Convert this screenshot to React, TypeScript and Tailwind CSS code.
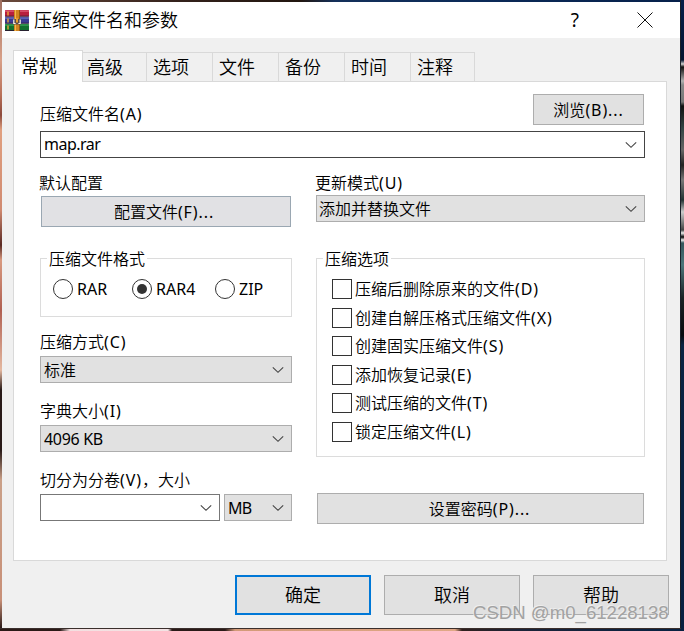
import React from "react";

type Kids = { children?: React.ReactNode };

// Chinese runs stay light, Latin runs are regular and slightly tracked in parentheses.
function Mixed({ text }: { text: string }) {
  return (
    <>
      {text.split(/([\x20-\x7e]+)/).map((part, i) =>
        i % 2 ? (
          <span key={i} className={`font-normal whitespace-pre ${part.startsWith("(") ? "tracking-[0.9px]" : ""}`}>
            {part}
          </span>
        ) : (
          part
        ),
      )}
    </>
  );
}

function Chevron() {
  return (
    <svg width="12" height="8" viewBox="0 0 12 8" className="shrink-0" fill="none" stroke="#444" strokeWidth="1.1">
      <path d="M0.8 1.3 6 6.3 11.2 1.3" />
    </svg>
  );
}

function Combo({ className, text = "", textClass = "" }: { className: string; text?: string; textClass?: string }) {
  return (
    <div className={`flex h-[27px] items-center justify-between border pr-[7px] pl-[3px] ${className}`}>
      <span className={textClass}>
        <Mixed text={text} />
      </span>
      <Chevron />
    </div>
  );
}

function Label({ className = "", text }: { className?: string; text: string }) {
  return (
    <div className={`h-5 whitespace-nowrap ${className}`}>
      <Mixed text={text} />
    </div>
  );
}

function Group({ title, className, children }: Kids & { title: string; className: string }) {
  return (
    <div className={`border border-[#dcdcdc] ${className}`}>
      <div className="-mt-[10px] ml-[6px] h-5 w-fit bg-white px-[2px]">{title}</div>
      {children}
    </div>
  );
}

function Radio({ label, checked, className }: { label: string; checked?: boolean; className: string }) {
  return (
    <div className={`flex items-center gap-1 ${className}`}>
      <div className="flex size-5 shrink-0 items-center justify-center rounded-full border border-[#333]">
        {checked && <div className="size-[10px] rounded-full bg-[#333]" />}
      </div>
      <span>
        <Mixed text={label} />
      </span>
    </div>
  );
}

function WinRarIcon() {
  return (
    <svg width="24" height="21" viewBox="0 0 24 21">
      <rect x="0" y="0" width="24" height="6.5" rx="0.8" fill="#b81f3e" />
      <rect x="0" y="0.3" width="24" height="1.6" fill="#d8506c" />
      <rect x="0" y="7" width="24" height="6.5" rx="0.8" fill="#3a3a92" />
      <rect x="0" y="7.3" width="24" height="1.6" fill="#6468b8" />
      <rect x="0" y="14" width="24" height="7" rx="0.8" fill="#12702f" />
      <rect x="0" y="14.3" width="24" height="1.6" fill="#359a50" />
      <path d="M0 6.2h24M0 13.2h24M0 20.5h24" stroke="#2a1830" strokeWidth="0.9" />
      <path d="M3 1.500v4M3 8.500v4M3 15.500v4" stroke="#e8a83c" strokeWidth="1.4" />
      <rect x="9" y="0" width="6" height="21" fill="#d0841f" />
      <path d="M10.500 0v21" stroke="#f0b850" strokeWidth="1" />
      <path d="M14.500 0v21" stroke="#8f5510" strokeWidth="0.9" />
      <rect x="8" y="9" width="8" height="5.500" fill="#5a4a48" />
      <path d="M8.800 9.500v4h1.800M15.200 9.500v4h-1.800" stroke="#f2f2f2" strokeWidth="1.200" fill="none" />
      <rect x="11" y="8" width="2" height="4.500" fill="#e5a030" />
    </svg>
  );
}

const tabs = [
  { name: "高级", w: "w-16 pl-1" },
  { name: "选项", w: "w-[66px] pl-[6px]" },
  { name: "文件", w: "w-[66px] pl-[6px]" },
  { name: "备份", w: "w-[66px] pl-[6px]" },
  { name: "时间", w: "w-[66px] pl-[6px]" },
  { name: "注释", w: "w-16 pl-[6px]" },
];

const options = [
  "压缩后删除原来的文件(D)",
  "创建自解压格式压缩文件(X)",
  "创建固实压缩文件(S)",
  "添加恢复记录(E)",
  "测试压缩的文件(T)",
  "锁定压缩文件(L)",
];

const grayBox = "border-[#adadad] bg-[#e1e1e1]";

export default function App() {
  return (
    <div className="relative h-[631px] w-[684px] overflow-hidden bg-[linear-gradient(90deg,#2b1a17_0,#2b1a17_60px,#f3dfe0_70px,#f3e3e4_168px,#2a1a18_172px,#2a1a18_225px,#d39a78_235px,#e0a886_455px,#30201e_462px,#1b2338_520px,#082142_684px)] p-[2px] pr-[4px] pb-[3px] font-['Noto_Sans','Noto_Sans_CJK_SC',sans-serif] text-[16px] leading-5 font-[350] text-black">
      <div className="absolute top-0 left-0 h-[2px] w-full bg-[linear-gradient(90deg,#6b4a3c_0,#33211b_180px,#22160f_300px,#14305a_335px,#0b2a58_480px,#06204a_684px)]" />
      <div className="absolute top-0 left-0 h-[628px] w-[2px] bg-[linear-gradient(180deg,#a07060_0,#d8a088_60px,#b87058_95px,#8c4a3c_115px,#e0a080_130px,#d08a70_210px,#5a2a24_245px,#d89a80_260px,#b06052_310px,#e4b8a0_370px,#281a18_390px,#281a18_450px,#caa088_480px,#c89078_600px,#2a1a18_628px)]" />
      <div className="absolute top-0 right-0 h-[631px] w-[4px] bg-[linear-gradient(180deg,#06204a_0,#041430_60px,#d0d0d0_64px,#101010_67px,#b0b0b0_81px,#888_85px,#777_102px,#111_106px,#344_128px,#666_150px,#222_165px,#777_180px,#233_200px,#ccc_212px,#444_230px,#eee_233px,#050505_237px,#eee_240px,#35565c_243px,#4c757a_265px,#1a2224_298px,#080a0e_335px,#0a2342_345px,#082040_631px)]" />
      <div className="absolute top-0 right-[3px] h-[628px] w-px bg-[#1a1f28]" />
      <div className="absolute bottom-[2px] left-0 h-px w-[681px] bg-[#3a2f2c]" />
      <div className="relative flex h-[626px] w-[678px] flex-col bg-[#f0f0f0]">
        <header className="flex h-9 shrink-0 items-center bg-white pl-[3px] text-[18px]">
          <WinRarIcon />
          <span className="ml-[5px] leading-6">压缩文件名和参数</span>
          <span className="mr-[58px] ml-auto text-[19px] leading-6 font-normal">?</span>
          <svg width="16" height="16" viewBox="0 0 16 16" className="mr-[27px]" stroke="#111" strokeWidth="1">
            <path d="M0.5 0.5 15.5 15.5M15.5 0.5 0.5 15.5" />
          </svg>
        </header>
        <div className="relative z-10 mt-3 ml-[11px] flex h-8 shrink-0 items-end text-[18px] leading-6">
          <div className="h-8 w-[70px] border border-b-0 border-[#d9d9d9] bg-white pt-[3px] pl-[7px]">常规</div>
          {tabs.map((t) => (
            <div key={t.name} className={`h-[30px] border-t border-r border-b border-[#d9d9d9] pt-[2px] ${t.w}`}>
              {t.name}
            </div>
          ))}
        </div>
        <main className="-mt-px ml-[11px] h-[480px] w-[654px] shrink-0 border border-[#d9d9d9] bg-white pt-3 pr-[21px] pl-[26px]">
          <div className="flex h-[37px] justify-between">
            <Label className="pt-[10px]" text="压缩文件名(A)" />
            <button className={`mr-px h-[31px] w-[111px] border ${grayBox}`}>
              <Mixed text="浏览(B)..." />
            </button>
          </div>
          <Combo className="w-[605px] border-[#444] bg-white" text="map.rar" textClass="-mt-[2px] tracking-[-0.5px]" />
          <div className="flex gap-6 pt-[15px]">
            <section className="w-[252px]">
              <Label className="mb-[3px] -ml-px" text="默认配置" />
              <button className="ml-px h-[31px] w-[250px] border border-[#9aa7b2] bg-[#e1e1e4] pr-1">
                <Mixed text="配置文件(F)..." />
              </button>
              <Group title="压缩文件格式" className="mt-[31px] h-[59px]">
                <div className="flex pt-[10px] pl-3">
                  <Radio label="RAR" className="w-[79px]" />
                  <Radio label="RAR4" checked className="w-[83px]" />
                  <Radio label="ZIP" className="" />
                </div>
              </Group>
              <Label className="mt-[15px] mb-1" text="压缩方式(C)" />
              <Combo className={grayBox} text="标准" />
              <Label className="mt-[18px] mb-1" text="字典大小(I)" />
              <Combo className={grayBox} text="4096 KB" textClass="tracking-[-0.3px]" />
              <Label className="mt-[18px] mb-1" text="切分为分卷(V)，大小" />
              <div className="flex gap-1">
                <Combo className="w-[180px] border-[#777] bg-white" />
                <Combo className={`w-[68px] ${grayBox}`} text="MB" textClass="tracking-[-0.7px]" />
              </div>
            </section>
            <section className="w-[329px]">
              <Label className="mb-[2px] -ml-px" text="更新模式(U)" />
              <Combo className={grayBox} text="添加并替换文件" textClass="-ml-px" />
              <Group title="压缩选项" className="mt-9 h-[199px]">
                <div className="mt-[10px] flex h-[163px] flex-col justify-between pl-[15px]">
                  {options.map((o) => (
                    <div key={o} className="flex h-5 items-center gap-[3px]">
                      <div className="size-5 border border-[#333]" />
                      <span className="whitespace-nowrap">
                        <Mixed text={o} />
                      </span>
                    </div>
                  ))}
                </div>
              </Group>
              <button className={`mt-9 ml-px h-[31px] w-[327px] border pr-[2px] ${grayBox}`}>
                <Mixed text="设置密码(P)..." />
              </button>
            </section>
          </div>
        </main>
        <footer className="mt-[14px] flex justify-end gap-[13px] pr-[11px] text-[18px] leading-6">
          <button className="h-10 w-[136px] border-2 border-[#0078d7] bg-[#e1e1e1]">确定</button>
          <button className={`h-10 w-[136px] border ${grayBox}`}>取消</button>
          <button className={`h-10 w-[136px] border ${grayBox}`}>帮助</button>
        </footer>
      </div>
      <div className="absolute top-[602px] left-[473px] z-20 font-['Liberation_Sans',sans-serif] text-[18.6px] leading-[22px] font-normal whitespace-nowrap text-[#a2a2a2] [text-shadow:-1px_-1px_0_#eee]">
        CSDN @m0_61228138
      </div>
    </div>
  );
}
